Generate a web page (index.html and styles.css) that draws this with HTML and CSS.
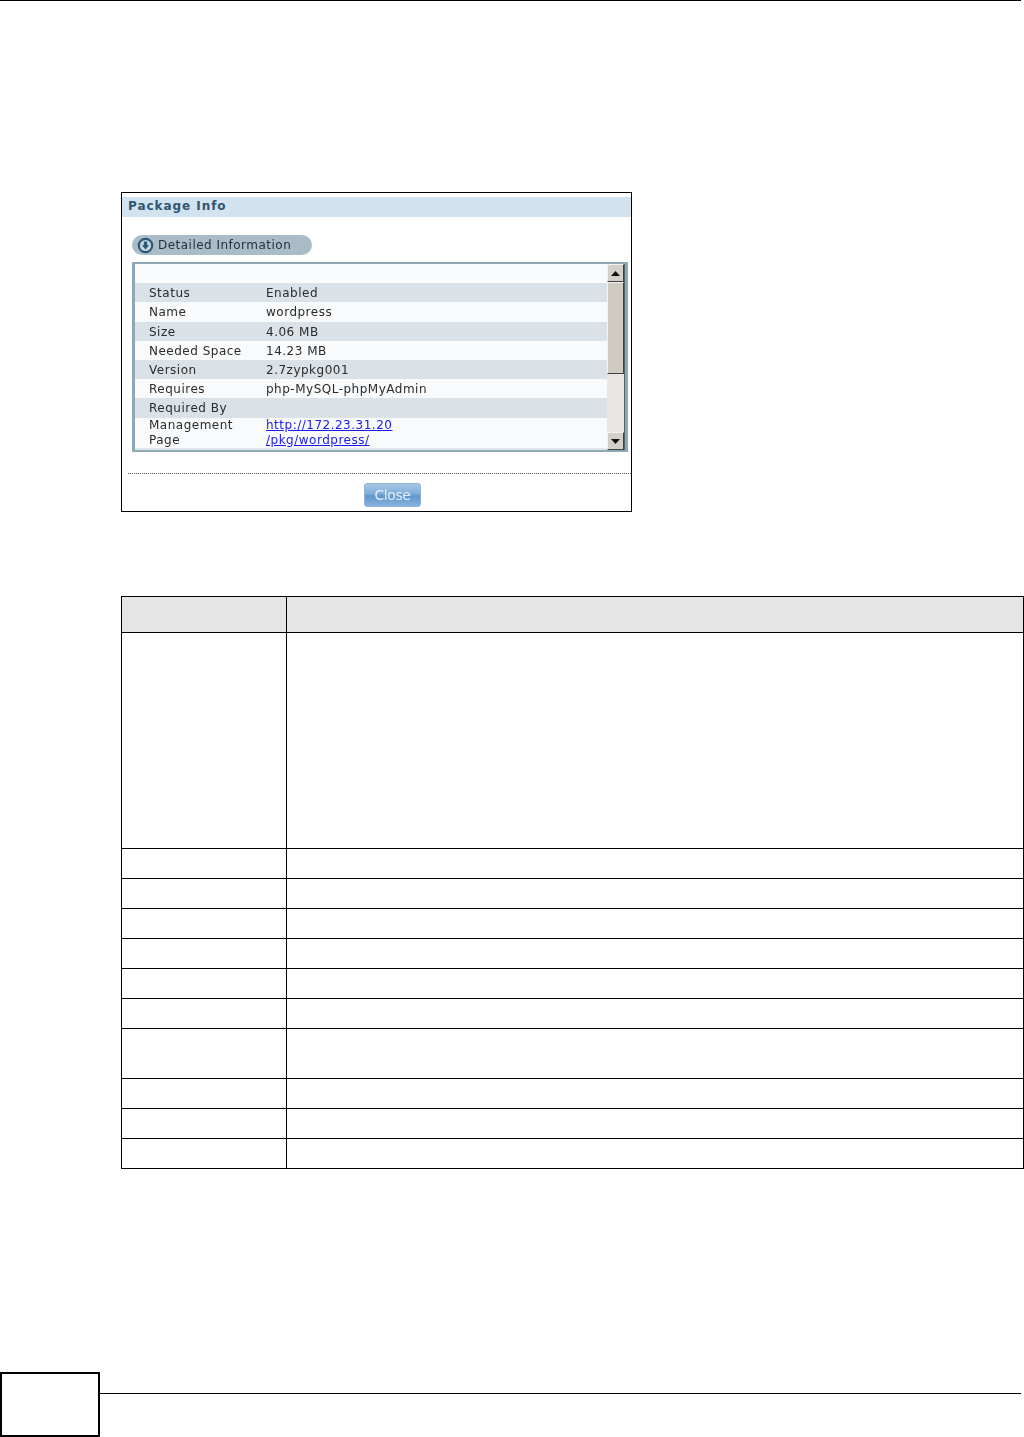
FILE: index.html
```html
<!DOCTYPE html>
<html lang="en">
<head>
<meta charset="utf-8">
<title>Package Info</title>
<link rel="stylesheet" href="styles.css">
</head>
<body>
<div class="top-rule"></div>
<main class="content">
  <section class="dialog">
    <h2 class="dialog-title">Package Info</h2>
    <div class="pill">
      <svg class="pill-icon" width="17" height="17" viewBox="0 0 17 17">
        <circle cx="8.5" cy="8.5" r="7.8" fill="#2d5878"/>
        <circle cx="8.5" cy="8.5" r="5.6" fill="#c9d6df"/>
        <path d="M6.8 4.6h3.4v3.6h1.9l-3.6 4.2-3.6-4.2h1.9z" fill="#2d5878"/>
      </svg>
      <span>Detailed Information</span>
    </div>
    <div class="panel">
      <div class="rows">
        <div class="row"></div>
        <div class="row alt"><span>Status</span><span>Enabled</span></div>
        <div class="row"><span>Name</span><span>wordpress</span></div>
        <div class="row alt"><span>Size</span><span>4.06 MB</span></div>
        <div class="row"><span>Needed Space</span><span>14.23 MB</span></div>
        <div class="row alt"><span>Version</span><span>2.7zypkg001</span></div>
        <div class="row"><span>Requires</span><span>php-MySQL-phpMyAdmin</span></div>
        <div class="row alt"><span>Required By</span><span></span></div>
        <div class="row tall"><span>Management<br>Page</span><span><a href="#">http://172.23.31.20<br>/pkg/wordpress/</a></span></div>
        <div class="row-end"></div>
      </div>
      <div class="scrollbar">
        <div class="sb-btn"><svg width="9" height="5" viewBox="0 0 9 5"><path d="M4.5 0L9 5H0z" fill="#111"/></svg></div>
        <div class="sb-thumb"></div>
        <div class="sb-track"></div>
        <div class="sb-btn"><svg width="9" height="5" viewBox="0 0 9 5"><path d="M0 0h9L4.5 5z" fill="#111"/></svg></div>
      </div>
    </div>
    <div class="dialog-foot">
      <button class="close-btn" type="button">Close</button>
    </div>
  </section>

  <table class="doc-table">
    <tr class="r-head"><th class="c1"></th><th></th></tr>
    <tr class="r-big"><td></td><td></td></tr>
    <tr class="r-std"><td></td><td></td></tr>
    <tr class="r-std"><td></td><td></td></tr>
    <tr class="r-std"><td></td><td></td></tr>
    <tr class="r-std"><td></td><td></td></tr>
    <tr class="r-std"><td></td><td></td></tr>
    <tr class="r-std"><td></td><td></td></tr>
    <tr class="r-two"><td></td><td></td></tr>
    <tr class="r-std"><td></td><td></td></tr>
    <tr class="r-std"><td></td><td></td></tr>
    <tr class="r-std"><td></td><td></td></tr>
  </table>
</main>
<footer class="page-foot">
  <div class="page-box"></div>
  <div class="page-line"></div>
</footer>
</body>
</html>
```

FILE: styles.css
```css
* { box-sizing: border-box; }
html, body { margin: 0; padding: 0; background: #fff; }
body {
  width: 1024px;
  height: 1437px;
  overflow: hidden;
  display: flex;
  flex-direction: column;
  font-family: "DejaVu Sans", sans-serif;
}
.top-rule { width: 1021px; height: 1px; background: #000; flex: none; }
.content { flex: 1; min-height: 0; padding: 191px 0 0 121px; }

.dialog {
  width: 511px;
  height: 320px;
  border: 1px solid #000;
  padding-top: 4px;
  display: flex;
  flex-direction: column;
  font-size: 12px;
  color: #333;
  filter: blur(0.3px);
}
.dialog-title {
  margin: 0;
  height: 20px;
  line-height: 18px;
  padding-left: 6px;
  background: #d2e3ef;
  color: #2f5573;
  font-size: 12px;
  font-weight: bold;
  letter-spacing: 0.95px;
}
.pill {
  margin: 18px 0 0 10px;
  width: 180px;
  height: 20px;
  border-radius: 10px;
  background: #a9bcc8;
  display: flex;
  align-items: center;
  gap: 4px;
  padding-left: 5px;
  color: #22323e;
  letter-spacing: 0.48px;
}
.pill-icon { flex: none; }
.panel {
  margin: 7px 0 0 10px;
  width: 496px;
  height: 190px;
  border: 3px solid #8fa8b5;
  border-top-width: 2px;
  border-bottom-width: 2px;
  display: flex;
  background: #f8fafc;
}
.rows { width: 472px; display: flex; flex-direction: column; }
.row {
  height: 19.2px;
  flex: none;
  display: grid;
  grid-template-columns: 117px 1fr;
  padding: 2px 0 0 14px;
  align-items: center;
  background: #f8fafc;
  line-height: 15px;
  color: #2b2b2b;
  letter-spacing: 0.5px;
}
.row.alt { background: #dae1e7; }
.row.tall { height: 30px; padding-top: 0; align-items: start; }
.row-end { flex: 1; background: #dfe6eb; }
.row a { color: #1a1af0; text-decoration: underline; }

.scrollbar {
  width: 18px;
  display: flex;
  flex-direction: column;
  background: #e9e7e3;
  border-right: 1px solid #56626a;
}
.sb-btn {
  flex: none;
  height: 18px;
  background: #d4d0c8;
  border: 1px solid;
  border-color: #f4f2ee #404040 #404040 #f4f2ee;
  display: flex;
  align-items: center;
  justify-content: center;
}
.sb-thumb {
  flex: none;
  height: 92px;
  background: #d0cbc3;
  border: 1px solid;
  border-color: #f4f2ee #404040 #404040 #f4f2ee;
}
.sb-track { flex: 1; }

.dialog-foot {
  margin: 21px 0 0 6px;
  border-top: 1px dotted #555;
  display: flex;
  padding: 9px 0 0 236px;
}
.close-btn {
  width: 57px;
  height: 24px;
  padding: 0;
  border: 1px solid #8db2d6;
  border-radius: 3px;
  background: linear-gradient(#a9c8e4 0%, #7eacd8 45%, #5f97cf 55%, #86b2dc 100%);
  color: #e4eef6;
  font: 14px "DejaVu Sans", sans-serif;
  letter-spacing: -0.4px;
}

.doc-table {
  margin-top: 84px;
  width: 903px;
  border-collapse: collapse;
  table-layout: fixed;
}
.doc-table th, .doc-table td { border: 1px solid #000; padding: 0; }
.doc-table th { background: #e5e5e5; }
.doc-table .c1 { width: 165px; }
.r-head { height: 36px; }
.r-big { height: 216px; }
.r-std { height: 30px; }
.r-two { height: 50px; }

.page-foot { flex: none; height: 65px; display: flex; align-items: flex-start; }
.page-box { width: 100px; height: 65px; border: 2px solid #000; flex: none; }
.page-line { width: 921px; height: 1px; margin-top: 21px; background: #000; }
```
